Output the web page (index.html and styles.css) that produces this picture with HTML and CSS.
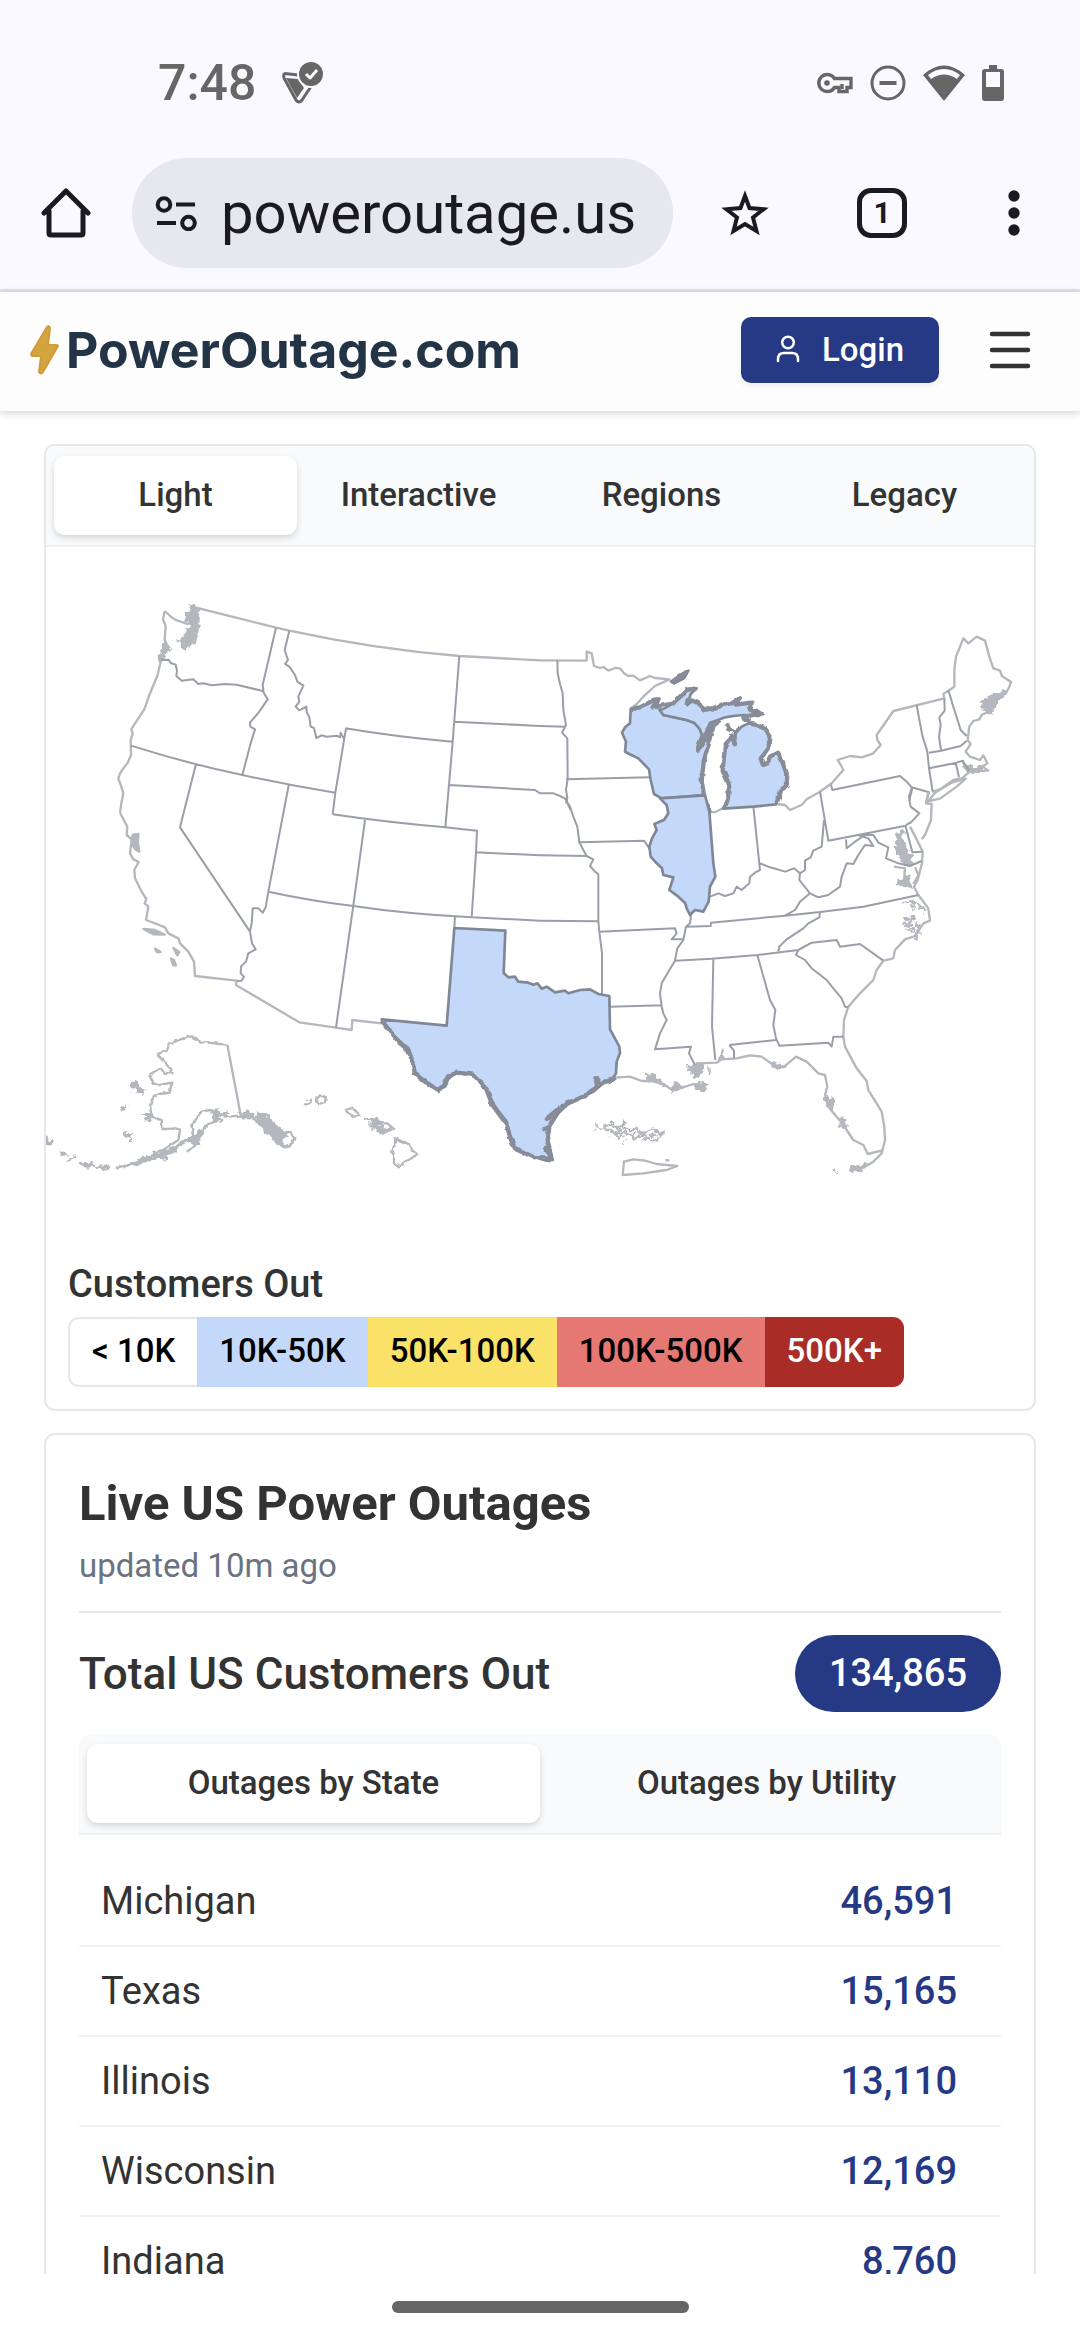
FILE: index.html
```html
<!DOCTYPE html>
<html lang="en">
<head>
<meta charset="utf-8">
<meta name="viewport" content="width=device-width, initial-scale=1">
<title>PowerOutage.com</title>
<link rel="stylesheet" href="styles.css">
</head>
<body>
<div class="browser">
  <div class="status">
    <span class="clock">7:48</span>
    <svg class="status-app" viewBox="0 0 42 42" width="42" height="42" fill="none" stroke="#666" stroke-width="3" stroke-linejoin="round" stroke-linecap="round"><path d="M16 17 4 16 15 36 22 26z" fill="#666" stroke="none"/><path d="M16 13 3 11.500Q1 12 2 16L14 38Q17 42 20 38L28 26"/><path d="M22 28 17 37" stroke="#faf9ff" stroke-width="2"/><circle cx="29" cy="12" r="14" fill="#faf9ff" stroke="none"/><circle cx="29" cy="12" r="12" fill="#666" stroke="none"/><path d="m24 12 4 4 7-8" stroke="#faf9ff" stroke-linecap="butt"/></svg>
    <div class="status-icons">
      <svg viewBox="0 0 36 22" width="36" height="22" fill="none" stroke="#666" stroke-width="3.4"><path d="M17.500 6.500A8.500 8.500 0 1 0 17.500 15.500H22V19.500H30V15.500H34V6.500z"/><circle cx="10" cy="11" r="2.800" fill="#666" stroke="none"/><path d="M25 12v5"/></svg>
      <svg viewBox="0 0 36 36" width="36" height="36" fill="none" stroke="#666" stroke-width="3"><circle cx="18" cy="18" r="16"/><path d="M9.500 18h17" stroke-width="4"/></svg>
      <svg viewBox="0 0 42 36" width="42" height="36" fill="#666"><path fill-rule="evenodd" d="M21 36 0 10Q21-9 42 10zM21 4Q12 4 5 10L8 14Q21 5 34 14L37 10Q30 4 21 4z"/></svg>
      <svg viewBox="0 0 22 36" width="22" height="36" fill="#666"><path fill-rule="evenodd" d="M7 0h8v4h4q3 0 3 3v26q0 3-3 3H3q-3 0-3-3V7q0-3 3-3h4zM4 7v15h14V7z"/></svg>
    </div>
  </div>
  <div class="toolbar">
    <button class="icon-btn" aria-label="Home"><svg viewBox="0 0 50 50" width="50" height="50" fill="none" stroke="#1b1b1f" stroke-width="5" stroke-linejoin="round" stroke-linecap="round"><path d="M8 23V45q0 2 2 2H40q2 0 2-2V23M3 25 25 3 47 25"/></svg></button>
    <div class="omnibox">
      <svg viewBox="0 0 42 35" width="42" height="35" fill="none" stroke="#1b1b1f" stroke-width="4"><circle cx="9" cy="8.500" r="6.300"/><path d="M21 8.500H40M2 27H21"/><circle cx="33.500" cy="27" r="6.300"/></svg>
      <input class="url" type="text" aria-label="Address" value="poweroutage.us">
    </div>
    <div class="toolbar-actions">
      <button class="icon-btn" aria-label="Bookmark"><svg viewBox="0 0 48 48" width="48" height="48" fill="none" stroke="#1b1b1f" stroke-width="4"><path d="M24 7 28.500 19 42.500 20.200 32 28.500 35.500 42 24 35 12.500 42 16 28.500 5.500 20.200 19.500 19z"/></svg></button>
      <button class="tab-count" aria-label="Tabs">1</button>
      <button class="icon-btn" aria-label="More"><svg viewBox="0 0 12 46" width="12" height="46" fill="#1b1b1f"><circle cx="6" cy="6" r="5.700"/><circle cx="6" cy="23" r="5.700"/><circle cx="6" cy="40" r="5.700"/></svg></button>
    </div>
  </div>
</div>

<header class="site-header">
  <a class="brand" href="#">
    <svg viewBox="0 0 30 50" width="30" height="50" fill="#d4a53f" stroke="#d39a3a" stroke-width="2" stroke-linejoin="round"><path d="M17 2 1 29Q1 31 3 31H11L9 47Q11 50 13 47L28 21Q28 20 26 20H18L20 3Q19 0 17 2z"/></svg>
    <span>PowerOutage.com</span>
  </a>
  <div class="header-actions">
    <button class="login"><svg viewBox="0 0 24 28" width="24" height="28" fill="none" stroke="#fff" stroke-width="2.500" stroke-linecap="round"><circle cx="12" cy="7.500" r="5.800"/><path d="M2 26V24Q2 18 8 18H16Q22 18 22 24V26"/></svg>Login</button>
    <button class="icon-btn" aria-label="Menu"><svg viewBox="0 0 42 38" width="42" height="38" stroke="#333" stroke-width="4.500" stroke-linecap="round"><path d="M3 3H39M3 19H39M3 35H39"/></svg></button>
  </div>
</header>

<main class="page">
  <section class="card">
    <div class="tabs tabs-map">
      <button class="tab active">Light</button>
      <button class="tab">Interactive</button>
      <button class="tab">Regions</button>
      <button class="tab">Legacy</button>
    </div>
    <svg class="map" viewBox="18 351 2964 2079" role="img" aria-label="Map of power outages in the United States">
      <!-- ragged edge for inlets and islands -->
      <filter id="rough" x="-5%" y="-5%" width="110%" height="110%"><feTurbulence type="fractalNoise" baseFrequency="0.06" numOctaves="2" seed="4"/><feDisplacementMap in="SourceGraphic" scale="30" xChannelSelector="R" yChannelSelector="G"/></filter>
      <filter id="wavy" x="-5%" y="-5%" width="110%" height="110%"><feTurbulence type="fractalNoise" baseFrequency="0.05" numOctaves="2" seed="7"/><feDisplacementMap in="SourceGraphic" scale="12" xChannelSelector="R" yChannelSelector="G"/></filter>
      <!-- upper left -->
      <g>
        <path class="coast" d="M468 533 708 593 748 602Q1000 657 1258 678L1500 691M374 543 394 561 405 569 446 583M374 543 369 568 377 588 374 630 380 642 372 672 363 690 353 735 328 795 313 838 283 883 274 898 278 910 272 932 273 975 263 998 241 1028 235 1046 242 1064 250 1090 244 1120 240 1148"/>
        <path class="coast solid" filter="url(#rough)" d="M450 522 468 533 477 545 473 602 463 638 435 653 418 630 440 610 455 590 440 560 441 546 455 543zM372 640 388 646 370 660 384 657 370 684 358 688z"/>
        <path class="border" d="M363 690 385 689 392 699 407 704 411 722 409 738 425 752 460 748 475 762 490 760 515 766 555 762 590 764 668 783M708 593 668 765 671 788 683 808 660 842 652 852 630 878 631 890 645 898 632 940 607 1035M273 947Q440 1000 607 1035 745 1065 886 1088M748 602 734 660 744 690 735 702 748 710 765 735 772 755 790 767 775 800 778 815 767 830 778 841 799 830 800 846 808 862 812 890 822 894 829 924 845 916 860 920 890 917 900 922 902 908 912 927M916 895Q1076 922 1238 935M918 895 886 1088 878 1153M1258 678 1238 935 1216 1193M1244 875 1500 888M1228 1065 1485 1080 1500 1090M468 1002 420 1192 630 1505M746 1066 685 1385"/>
      </g>
      <!-- upper right -->
      <g transform="translate(1500 0)">
        <path class="coast" d="M0 691 140 692 140 665 155 670 162 708 180 714 190 711 205 722 225 714 240 715 252 730 265 738 280 737 300 751 330 738 345 744 388 748 345 768 310 800 290 822 270 838M840 1085 875 1060 910 1020 903 1006 893 990 930 978 965 982 1000 970 1022 945 1012 930 1010 915 1060 843 1213 805 1210 792 1225 782 1243 770 1243 720 1248 680 1270 625 1285 640 1310 620 1335 632 1348 680 1360 715 1380 722 1386 738 1413 756 1408 770 1398 790 1375 800 1355 840 1325 855 1318 868 1300 873 1288 890 1283 930 1292 942 1277 965 1290 980 1320 990 1330 976 1342 1000 1328 1010 1345 1022 1290 1025 1265 1045 1240 1050 1200 1078 1176 1085M1167 1113 1200 1106 1250 1070 1277 1046 1235 1058 1185 1088 1160 1120"/>
        <path class="coast solid" filter="url(#rough)" d="M1330 815 1345 803 1400 782 1372 812 1365 835 1350 832 1352 850 1342 838 1332 840zM1268 1000 1300 1015 1322 1005 1326 1022 1295 1028 1275 1020z"/>
        <path class="border" d="M52 690 53 730 60 762 68 790 70 840 78 885 66 908 82 925 83 1048 78 1078 82 1104 78 1120M0 888 78 890M78 1048 330 1042M0 1090 40 1090 60 1098 75 1105 92 1140M1130 825 1140 880 1147 916 1162 965 1167 1015 1178 1085M1213 805 1214 842 1198 862 1202 885 1197 920 1203 960M1225 780 1240 830 1262 900 1280 918M1167 968 1203 962 1262 948 1280 932M1167 1015 1250 998 1268 992 1288 1022M1247 998 1257 1042M872 1060 877 1080 1080 1038 1100 1055 1115 1072 1167 1087 1158 1120M1115 1075 1107 1100 1110 1112"/>
      </g>
      <!-- lower left, with Alaska and Hawaii -->
      <g transform="translate(0 1050)">
        <path class="coast" d="M240 98 262 140 260 165 275 178 270 220 280 238 296 246 283 270 285 295 305 335 319 357 314 370 325 380 318 420 350 432 375 442 385 460 415 475 420 490 445 515 462 545 465 588 590 602 588 615 778 727 888 743 935 750 937 720 1025 730"/>
        <path class="coast solid" d="M278 165 295 162 294 190 298 215 286 208 274 190zM310 447 345 450 374 464 340 463zM345 506 362 516 350 516zM400 504 418 516 412 526zM393 536 402 540 408 556 400 556z"/>
        <path class="coast" filter="url(#wavy)" d="M352 822 380 812 390 790 430 775 440 768 455 773 480 784 505 788 540 792 562 794M352 822 377 852 394 868 397 880 370 878 365 866 328 882 340 910 360 915 394 908 390 938 358 942 342 950 330 975 335 1010 365 1020 368 1048 395 1045 420 1052 415 1080 370 1110 345 1122 300 1143 270 1155 228 1162M420 1088 460 1070 455 1040 470 1010 485 995 512 990 535 1005 570 1012 602 1010 635 1012 680 1045 730 1095M415 1095 440 1080 480 1070 500 1035 540 1015M460 1085 480 1090 440 1115"/>
        <path class="coast" d="M562 794 602 1005"/>
        <path class="coast solid" filter="url(#rough)" d="M275 910 285 908 312 938 295 935zM247 985 254 976 256 988zM252 1064 270 1062 258 1070 270 1080zM305 1003 328 1000 340 1010 318 1018zM20 1070 30 1085 20 1090zM65 1118 76 1124 66 1124zM84 1138 102 1133zM122 1148 158 1155 150 1160 128 1158zM165 1158 208 1162 190 1165zM255 1158 290 1148 350 1120 385 1108 420 1090 390 1130 330 1138 270 1160zM448 1080 482 1050 484 1075 462 1100zM515 1010 525 985 545 1005 565 1000 535 1018zM600 1003 625 995 640 1008 615 1012zM655 1000 672 1003 715 1045 740 1060 728 1080 715 1090 680 1055 652 1020zM798 976 812 962 810 970zM978 1017 1012 1020 1022 1028 1010 1030 1000 1022zM990 1036 1005 1045 1000 1030 1028 1040 1035 1055 1012 1058z"/>
        <path class="coast" filter="url(#wavy)" d="M725 1060 750 1056 763 1075 755 1090 738 1102 712 1090M828 960 840 946 858 952 854 970 836 970zM916 990 936 983 958 1008 938 1010 925 1000zM1020 1030 1042 1030 1060 1045 1040 1055 1028 1045zM1065 1075 1105 1092 1118 1112 1132 1123 1110 1138 1095 1145 1078 1162 1062 1152 1062 1125 1053 1112 1066 1095z"/>
        <path class="border" d="M878 103Q1040 127 1216 142L1311 152 1308 217 1295 412M975 120 940 376 888 743M685 335Q810 362 940 378 1100 402 1295 412L1500 422M1308 217 1500 226M1245 408 1243 442M685 335 677 382 668 398 655 385 638 385 635 430 630 455 636 490 647 508 625 520 618 545 603 560 602 580 612 590 605 602 590 603"/>
      </g>
      <!-- lower right, with Puerto Rico -->
      <g transform="translate(1500 1050)">
        <path class="coast" d="M508 95 525 97 550 84M708 72 735 75 750 90 785 75 800 58 840 35 875 10M1165 35 1158 70 1175 72 1173 120 1155 165 1145 178M1110 140 1130 178 1148 215 1146 250 1133 300 1122 320 1135 345 1165 385 1170 422 1150 430 1125 468 1095 478 1065 510 1060 535 1030 542 1010 570 1000 600 960 640 925 680 912 720 910 770 915 800 950 865 980 903 985 930 1025 995 1033 1040 1035 1080 1025 1120 1000 1145 970 1163 928 1170M225 893 270 890 305 903 335 903 370 912 400 932 460 912 497 925 490 935M460 895 485 865 470 850 530 848 545 838 590 835 630 826 665 830 700 855 730 862 768 830 800 845 835 880 855 885 862 920 855 945 865 980 900 1022 920 1050 940 1080 970 1095 983 1122 1025 1112M248 1185 252 1145 280 1138 315 1142 350 1152 412 1158 380 1170 310 1180zM1062 260 1095 265 1092 300 1110 322M1125 262 1135 285 1120 312"/>
        <path class="coast solid" filter="url(#rough)" d="M1070 160 1088 150 1085 180 1110 225 1120 250 1095 255 1068 205zM1070 312 1105 290 1112 325zM318 885 345 885 362 910 380 920 350 905 325 900zM395 925 415 908 430 918 410 932zM465 915 490 908 500 920 482 932zM445 865 490 850 475 890 455 880zM505 862 507 878zM540 838 548 815 556 838zM695 852 735 858 712 868zM855 948 885 965 868 985zM900 1015 912 1020 914 1045 902 1036zM930 1168 980 1150 960 1170zM880 1168 888 1172z"/>
        <path class="coast" filter="url(#rough)" d="M1090 372 1110 365 1125 370 1110 385M1118 365 1150 385 1155 400M1090 420 1120 412 1112 436 1090 430M1092 450 1118 448 1138 432 1128 478M168 1030 182 1045 218 1030 232 1050 250 1028 255 1046 290 1048 300 1062 340 1046 368 1060 350 1082 310 1078 320 1060 285 1078 262 1056 240 1068 215 1050 188 1050M163 1052 170 1048M202 1070 206 1072M250 1086 258 1090M230 1062 245 1048M270 1070 285 1060M330 1070 350 1062"/>
        <path class="coast" d="M376 1140 388 1142"/>
        <path class="border" d="M640 78 660 270 645 278 630 290 628 310 605 330 590 320 580 340 555 348 535 340 510 350M660 250 690 262 712 268 735 275 762 265 780 280 795 270 795 242 812 232 820 212 845 200 852 120M840 35 865 182 1097 137 1110 128M1117 25 1108 60 1112 80 1138 100 1110 130M1097 140 1117 217 1148 215M780 280 778 300 810 340 835 352 865 345 900 320 905 290 920 250 940 252 955 225 975 195 1000 198 985 175 955 165M918 178 920 205 945 185 975 165 1000 165 1015 188 1045 202 1038 235 1075 250 1110 258 1145 243M810 340 780 365 765 390 735 407 840 396 970 380 1135 345M440 440 512 438 513 428 735 407M405 542 515 536 652 525 775 510M840 396 838 412 805 430 790 445 740 478 718 500 715 514M775 510 815 488 890 480 900 500 960 492 1030 542M775 510 768 525 795 540 815 565 860 600 880 625 905 655 915 680 925 682M652 525 690 660 706 690 700 735 708 775 718 797 865 788 875 800 880 770 910 770M520 536 516 740 526 840M568 795 708 780M568 795 582 812 582 835M453 406 450 430 438 440 430 480 412 505 405 542 385 575 365 610 360 640 365 680 370 700 380 720 360 760 345 808 453 800 447 820 465 855M210 680 365 676M0 226 140 228M0 422 175 424M75 55 90 80 100 110 112 140 118 187 130 210 140 228 160 238 150 258 165 275 175 282 175 424 178 455 186 520 186 642M118 187 312 182 328 205M178 455 405 445 410 460 395 478 428 478"/>
      </g>
      <!-- states with 10K-50K customers out -->
      <path class="hit" d="M1772 838 1800 832 1845 808 1858 806 1850 830 1862 840 1870 855 1940 870 1962 878 1978 895 1990 922 1988 935 1973 964 2000 925 2020 890 2005 945 1992 990 1985 1050 1992 1095 1865 1105 1842 1092 1832 1050 1827 1018 1795 985 1768 972 1755 965 1758 935 1746 908 1755 892 1770 880z"/>
      <path class="hit" d="M1860 842 1900 820 1925 800 1940 780 1970 775 1952 792 1942 825 1958 812 1975 820 1995 838 2020 840 2045 824 2075 820 2100 805 2088 824 2135 818 2130 842 2168 850 2155 858 2110 855 2080 858 2055 862 2040 868 2010 878 1990 925 1978 895 1962 878 1940 870 1870 855zM2105 890 2125 880 2150 885 2175 895 2188 915 2186 955 2178 968 2162 985 2168 1003 2182 998 2190 980 2212 968 2225 990 2232 1018 2242 1035 2240 1065 2222 1085 2208 1123 2140 1130 2050 1136 2065 1100 2066 1060 2048 1020 2055 965 2055 940 2075 920 2082 942 2088 905zM1893 755 1925 732 1945 722 1932 745 1902 760z"/>
      <path class="hit thick" filter="url(#wavy)" d="M1772 838 1800 832 1845 808 1855 808 1838 832 1900 820 1940 780 1970 775M1940 825 1942 810 1958 812 1975 820 1995 838 2020 838 2045 824 2075 820 2100 805 2088 824 2135 818 2130 840 2168 850 2110 860 2130 875M1990 910 1972 962 2018 885 2005 945 1992 990 1985 1050 1994 1110 2010 1148M2040 870 2000 900M2060 880 2075 900 2060 895M2055 1136 2065 1100 2066 1060 2048 1020 2055 950 2075 920 2082 940 2085 905 2100 892M2125 880 2150 885 2175 895 2188 915 2186 955 2162 985 2168 1003 2182 998 2190 980 2212 968 2225 990 2242 1035 2240 1065 2222 1085 2210 1120M1896 755 1940 725"/>
      <path class="hit" d="M1860 1105 1995 1096 2008 1145 2020 1300 2026 1340 2010 1370 2006 1415 1990 1445 1965 1440 1950 1455 1940 1435 1936 1420 1915 1400 1888 1380 1900 1342 1870 1335 1866 1315 1850 1300 1832 1280 1828 1250 1836 1225 1850 1200 1843 1182 1872 1170 1885 1150 1880 1125z"/>
      <path class="hit" d="M1243 1494 1396 1502 1391 1629 1405 1642 1425 1640 1435 1655 1465 1658 1480 1664 1492 1660 1505 1676 1520 1670 1545 1687 1575 1682 1585 1690 1620 1680 1650 1678 1675 1692 1708 1698 1710 1798 1722 1820 1738 1850 1740 1868 1730 1895 1728 1930 1715 1950 1690 1960 1660 1985 1580 2025 1555 2050 1530 2090 1525 2130 1538 2190 1520 2192 1480 2180 1425 2155 1410 2115 1400 2075 1365 2030 1335 1970 1300 1934 1250 1928 1225 1945 1215 1970 1195 1980 1165 1960 1125 1930 1115 1880 1105 1858 1060 1815 1025 1768 1220 1787z"/>
      <path class="hit thick" filter="url(#wavy)" d="M1025 1772 1060 1815 1080 1840 1105 1860 1117 1895 1125 1930 1150 1952 1195 1980 1213 1965 1225 1938 1250 1928 1300 1934 1325 1960 1340 1980 1357 2025 1398 2080 1410 2120 1425 2155 1480 2181 1510 2182 1532 2192M1532 2192 1523 2135 1528 2085 1550 2045 1580 2022 1640 1995 1675 1962 1728 1945M1515 2070 1545 2045 1560 2030M1510 2100 1525 2090M1510 2150 1522 2160M1662 1950 1668 1942 1675 1950 1665 1958"/>
    </svg>
    <div class="legend">
      <h2 class="legend-title">Customers Out</h2>
      <div class="scale">
        <span class="step step-1">&lt; 10K</span><span class="step step-2">10K-50K</span><span class="step step-3">50K-100K</span><span class="step step-4">100K-500K</span><span class="step step-5">500K+</span>
      </div>
    </div>
  </section>

  <section class="card live">
    <div class="live-head">
      <h1>Live US Power Outages</h1>
      <p>updated 10m ago</p>
    </div>
    <div class="total">
      <h2>Total US Customers Out</h2>
      <span class="badge">134,865</span>
    </div>
    <div class="tabs tabs-list">
      <button class="tab active">Outages by State</button>
      <button class="tab">Outages by Utility</button>
    </div>
    <table class="states">
      <tr><th scope="row">Michigan</th><td>46,591</td></tr>
      <tr><th scope="row">Texas</th><td>15,165</td></tr>
      <tr><th scope="row">Illinois</th><td>13,110</td></tr>
      <tr><th scope="row">Wisconsin</th><td>12,169</td></tr>
      <tr><th scope="row">Indiana</th><td>8,760</td></tr>
    </table>
  </section>
</main>
<div class="gesture"><span class="handle"></span></div>
</body>
</html>
```
FILE: styles.css
```css
* { box-sizing: border-box; }
body {
  margin: 0;
  height: 100vh;
  display: flex;
  flex-direction: column;
  background: #fff;
  color: #333;
  font-family: Roboto, "Noto Sans", sans-serif;
}
h1, h2, p { margin: 0; }
button { border: 0; padding: 0; background: none; color: inherit; font: inherit; }
svg { display: block; flex: none; }

.browser { flex: none; background: #faf9ff; border-bottom: 3px solid #e2e1ec; }
.status { height: 158px; display: flex; align-items: center; padding: 8px 76px 0 158px; }
.clock { font-size: 50px; line-height: 56px; font-weight: 500; color: #666; }
.status-app { margin-left: 26px; }
.status-icons { margin-left: auto; display: flex; align-items: center; gap: 17px; }

.toolbar { display: flex; align-items: center; padding: 0 60px 21px 41px; }
.omnibox { flex: 1; min-width: 0; height: 110px; margin-left: 41px; padding: 0 24px 0 23px; display: flex; align-items: center; gap: 24px; border-radius: 55px; background: #e6e7ef; }
.url { flex: 1; min-width: 0; width: 100%; height: 80px; padding: 0; border: 0; outline: 0; background: none; color: #1b1b1f; font: 400 58px/80px Roboto, sans-serif; }
.toolbar-actions { display: flex; align-items: center; gap: 88px; margin-left: 48px; }
.tab-count { width: 50px; height: 50px; border: 5px solid #1b1b1f; border-radius: 14px; color: #1b1b1f; font-size: 30px; line-height: 40px; font-weight: 700; }
.toolbar-actions .icon-btn:last-child { margin-left: 13px; }

.site-header { flex: none; height: 119px; padding: 0 49px 3px 30px; display: flex; align-items: center; justify-content: space-between; background: #fdfdfd; box-shadow: 0 2px 8px rgba(0, 0, 0, .18); }
.brand { display: flex; align-items: center; gap: 6px; color: #243447; text-decoration: none; font: 700 50px/60px Inter, sans-serif; }
.header-actions { display: flex; align-items: center; gap: 50px; }
.login { width: 198px; height: 66px; padding-bottom: 2px; display: flex; align-items: center; justify-content: center; gap: 22px; border-radius: 10px; background: #253985; color: #fff; font-size: 33px; font-weight: 500; box-shadow: 0 3px 6px rgba(0, 0, 0, .06); }

.page { flex: 1; min-height: 0; overflow: hidden; padding: 33px 44px 0; display: flex; flex-direction: column; gap: 22px; }
.card { flex: none; border: 2px solid #e5e7eb; border-radius: 11px; background: #fff; }
.tabs { display: flex; padding: 10px 8px; border-bottom: 2px solid #eff0f2; border-radius: 11px 11px 0 0; background: #f9fafc; }
.tab { flex: 1; height: 79px; padding-bottom: 2px; border-radius: 11px; font-size: 33px; line-height: 40px; font-weight: 500; }
.tab.active { background: #fff; box-shadow: 0 3px 6px rgba(0, 0, 0, .15); }

.map { width: 100%; }
.coast { fill: none; stroke: #b4b7be; stroke-width: 7; stroke-linejoin: round; }
.coast.solid { fill: #b4b7be; }
.border { fill: none; stroke: #9a9ea8; stroke-width: 6; stroke-linejoin: round; }
.hit { fill: #c4d9fa; stroke: #7f8795; stroke-width: 8; stroke-linejoin: round; }
.hit.thick { fill: none; stroke: #878c98; stroke-width: 13; }

.legend { padding: 22px; }
.legend-title { font-size: 38px; line-height: 44px; font-weight: 500; }
.scale { display: flex; width: max-content; margin-top: 11px; }
.step { height: 70px; padding: 0 22px; font-size: 33px; line-height: 68px; font-weight: 500; color: #000; }
.step-1 { border: 2px solid #e5e7eb; border-right: 0; border-radius: 11px 0 0 11px; line-height: 64px; }
.step-2 { background: #c4d9fa; }
.step-3 { background: #fae167; }
.step-4 { background: #e67873; }
.step-5 { background: #a92c26; color: #fff; border-radius: 0 11px 11px 0; }

.live { padding: 33px; padding-bottom: 0; }
.live-head { padding: 6px 0 25px; border-bottom: 2px solid #e5e7eb; }
.live-head h1 { font-size: 49px; line-height: 60px; font-weight: 700; }
.live-head p { margin-top: 12px; font-size: 33px; line-height: 40px; color: #6b7280; }
.total { display: flex; align-items: center; justify-content: space-between; padding: 22px 0; }
.total h2 { font-size: 44px; line-height: 52px; font-weight: 500; }
.badge { padding: 0 34px; border-radius: 39px; background: #253985; color: #fff; font-size: 38px; line-height: 77px; font-weight: 500; }
.states { width: 100%; margin-top: 22px; border-collapse: separate; border-spacing: 0; font-size: 38px; line-height: 88px; }
.states th, .states td { padding: 0; height: 90px; border-bottom: 2px solid #f2f2f3; }
.states th { padding-left: 22px; text-align: left; font-weight: 400; }
.states td { padding-right: 44px; text-align: right; font-weight: 500; color: #253985; }

.gesture { flex: none; height: 66px; display: flex; justify-content: center; align-items: center; background: #fff; position: relative; }
.handle { width: 297px; height: 12px; border-radius: 6px; background: #666; }
```
